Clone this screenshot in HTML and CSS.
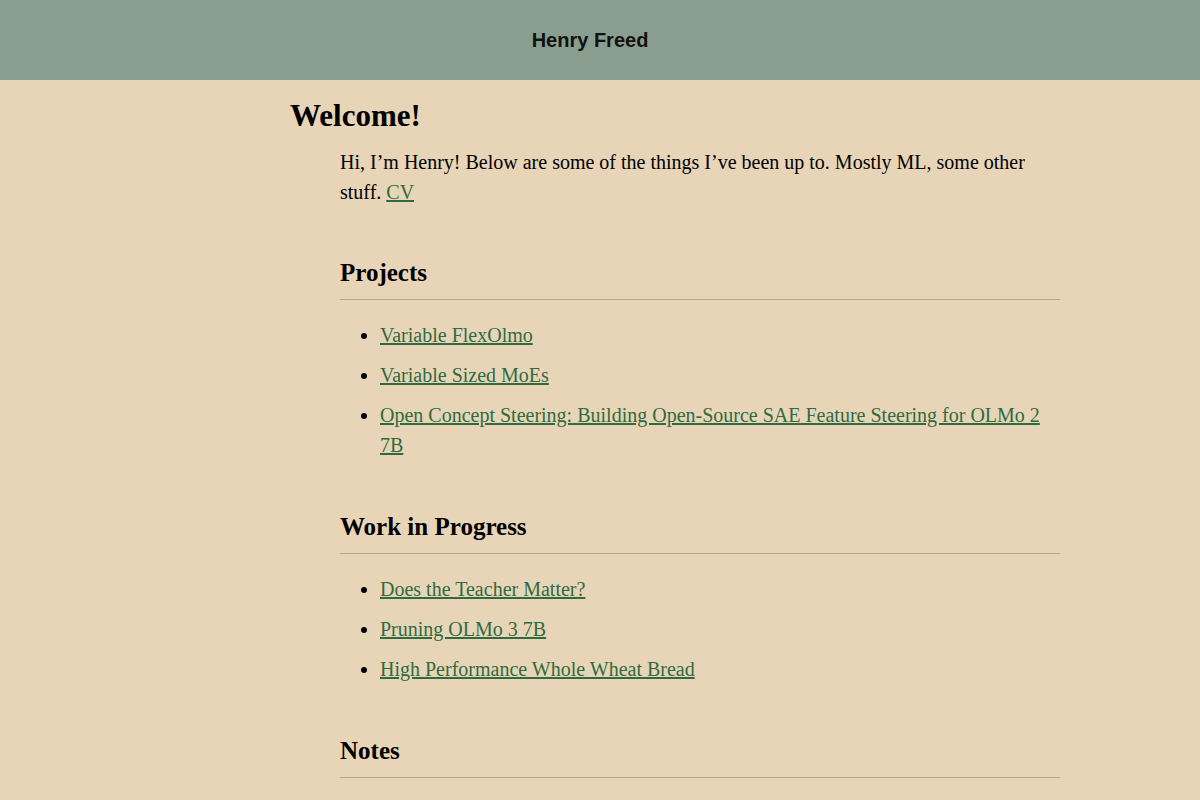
FILE: index.html
```html
<!DOCTYPE html>
<html lang="en">
<head>
<meta charset="utf-8">
<title>Henry Freed</title>
<link rel="stylesheet" href="styles.css">
</head>
<body>
<header class="site-header">
  <span class="site-title">Henry Freed</span>
</header>
<main class="page">
  <h1 class="page-title">Welcome!</h1>
  <div class="content">
    <p class="intro">Hi, I’m Henry! Below are some of the things I’ve been up to. Mostly ML, some other stuff. <a href="#">CV</a></p>

    <section class="section">
      <h2 class="section-title">Projects</h2>
      <ul class="entries">
        <li><a href="#">Variable FlexOlmo</a></li>
        <li><a href="#">Variable Sized MoEs</a></li>
        <li><a href="#">Open Concept Steering: Building Open-Source SAE Feature Steering for OLMo 2 7B</a></li>
      </ul>
    </section>

    <section class="section">
      <h2 class="section-title">Work in Progress</h2>
      <ul class="entries">
        <li><a href="#">Does the Teacher Matter?</a></li>
        <li><a href="#">Pruning OLMo 3 7B</a></li>
        <li><a href="#">High Performance Whole Wheat Bread</a></li>
      </ul>
    </section>

    <section class="section">
      <h2 class="section-title">Notes</h2>
      <ul class="entries">
        <li><a href="#">Notes</a></li>
      </ul>
    </section>
  </div>
</main>
</body>
</html>
```
FILE: styles.css
```css
html, body {
  margin: 0;
  padding: 0;
}

body {
  background: #e8d5b7;
  color: #000;
  font-family: "Liberation Serif", "Times New Roman", serif;
  font-size: 20px;
  line-height: 30px;
}

.site-header {
  height: 80px;
  background: #8a9e8f;
  display: flex;
  align-items: center;
  justify-content: center;
  padding-right: 20px;
}

.site-title {
  font-family: "Liberation Sans", Arial, sans-serif;
  font-weight: bold;
  font-size: 20px;
  color: #111;
}

.page {
  margin: 0 140px 0 290px;
  padding-top: 18px;
}

.page-title {
  margin: 0;
  font-size: 31px;
  line-height: 36px;
  font-weight: bold;
}

.content {
  margin-left: 50px;
  padding-top: 13px;
}

.intro {
  margin: 0;
}

a {
  color: #2f6b42;
  text-decoration: underline;
}

.section {
  margin-top: 51px;
}

.section + .section {
  margin-top: 52px;
}

.section-title {
  margin: 0;
  font-size: 25px;
  line-height: 30px;
  font-weight: bold;
  padding-bottom: 11px;
  border-bottom: 1px solid #b7a68b;
}

.entries {
  margin: 20px 0 0;
  padding-left: 40px;
}

.entries li {
  margin-bottom: 10px;
}

.entries li:last-child {
  margin-bottom: 0;
}
```
